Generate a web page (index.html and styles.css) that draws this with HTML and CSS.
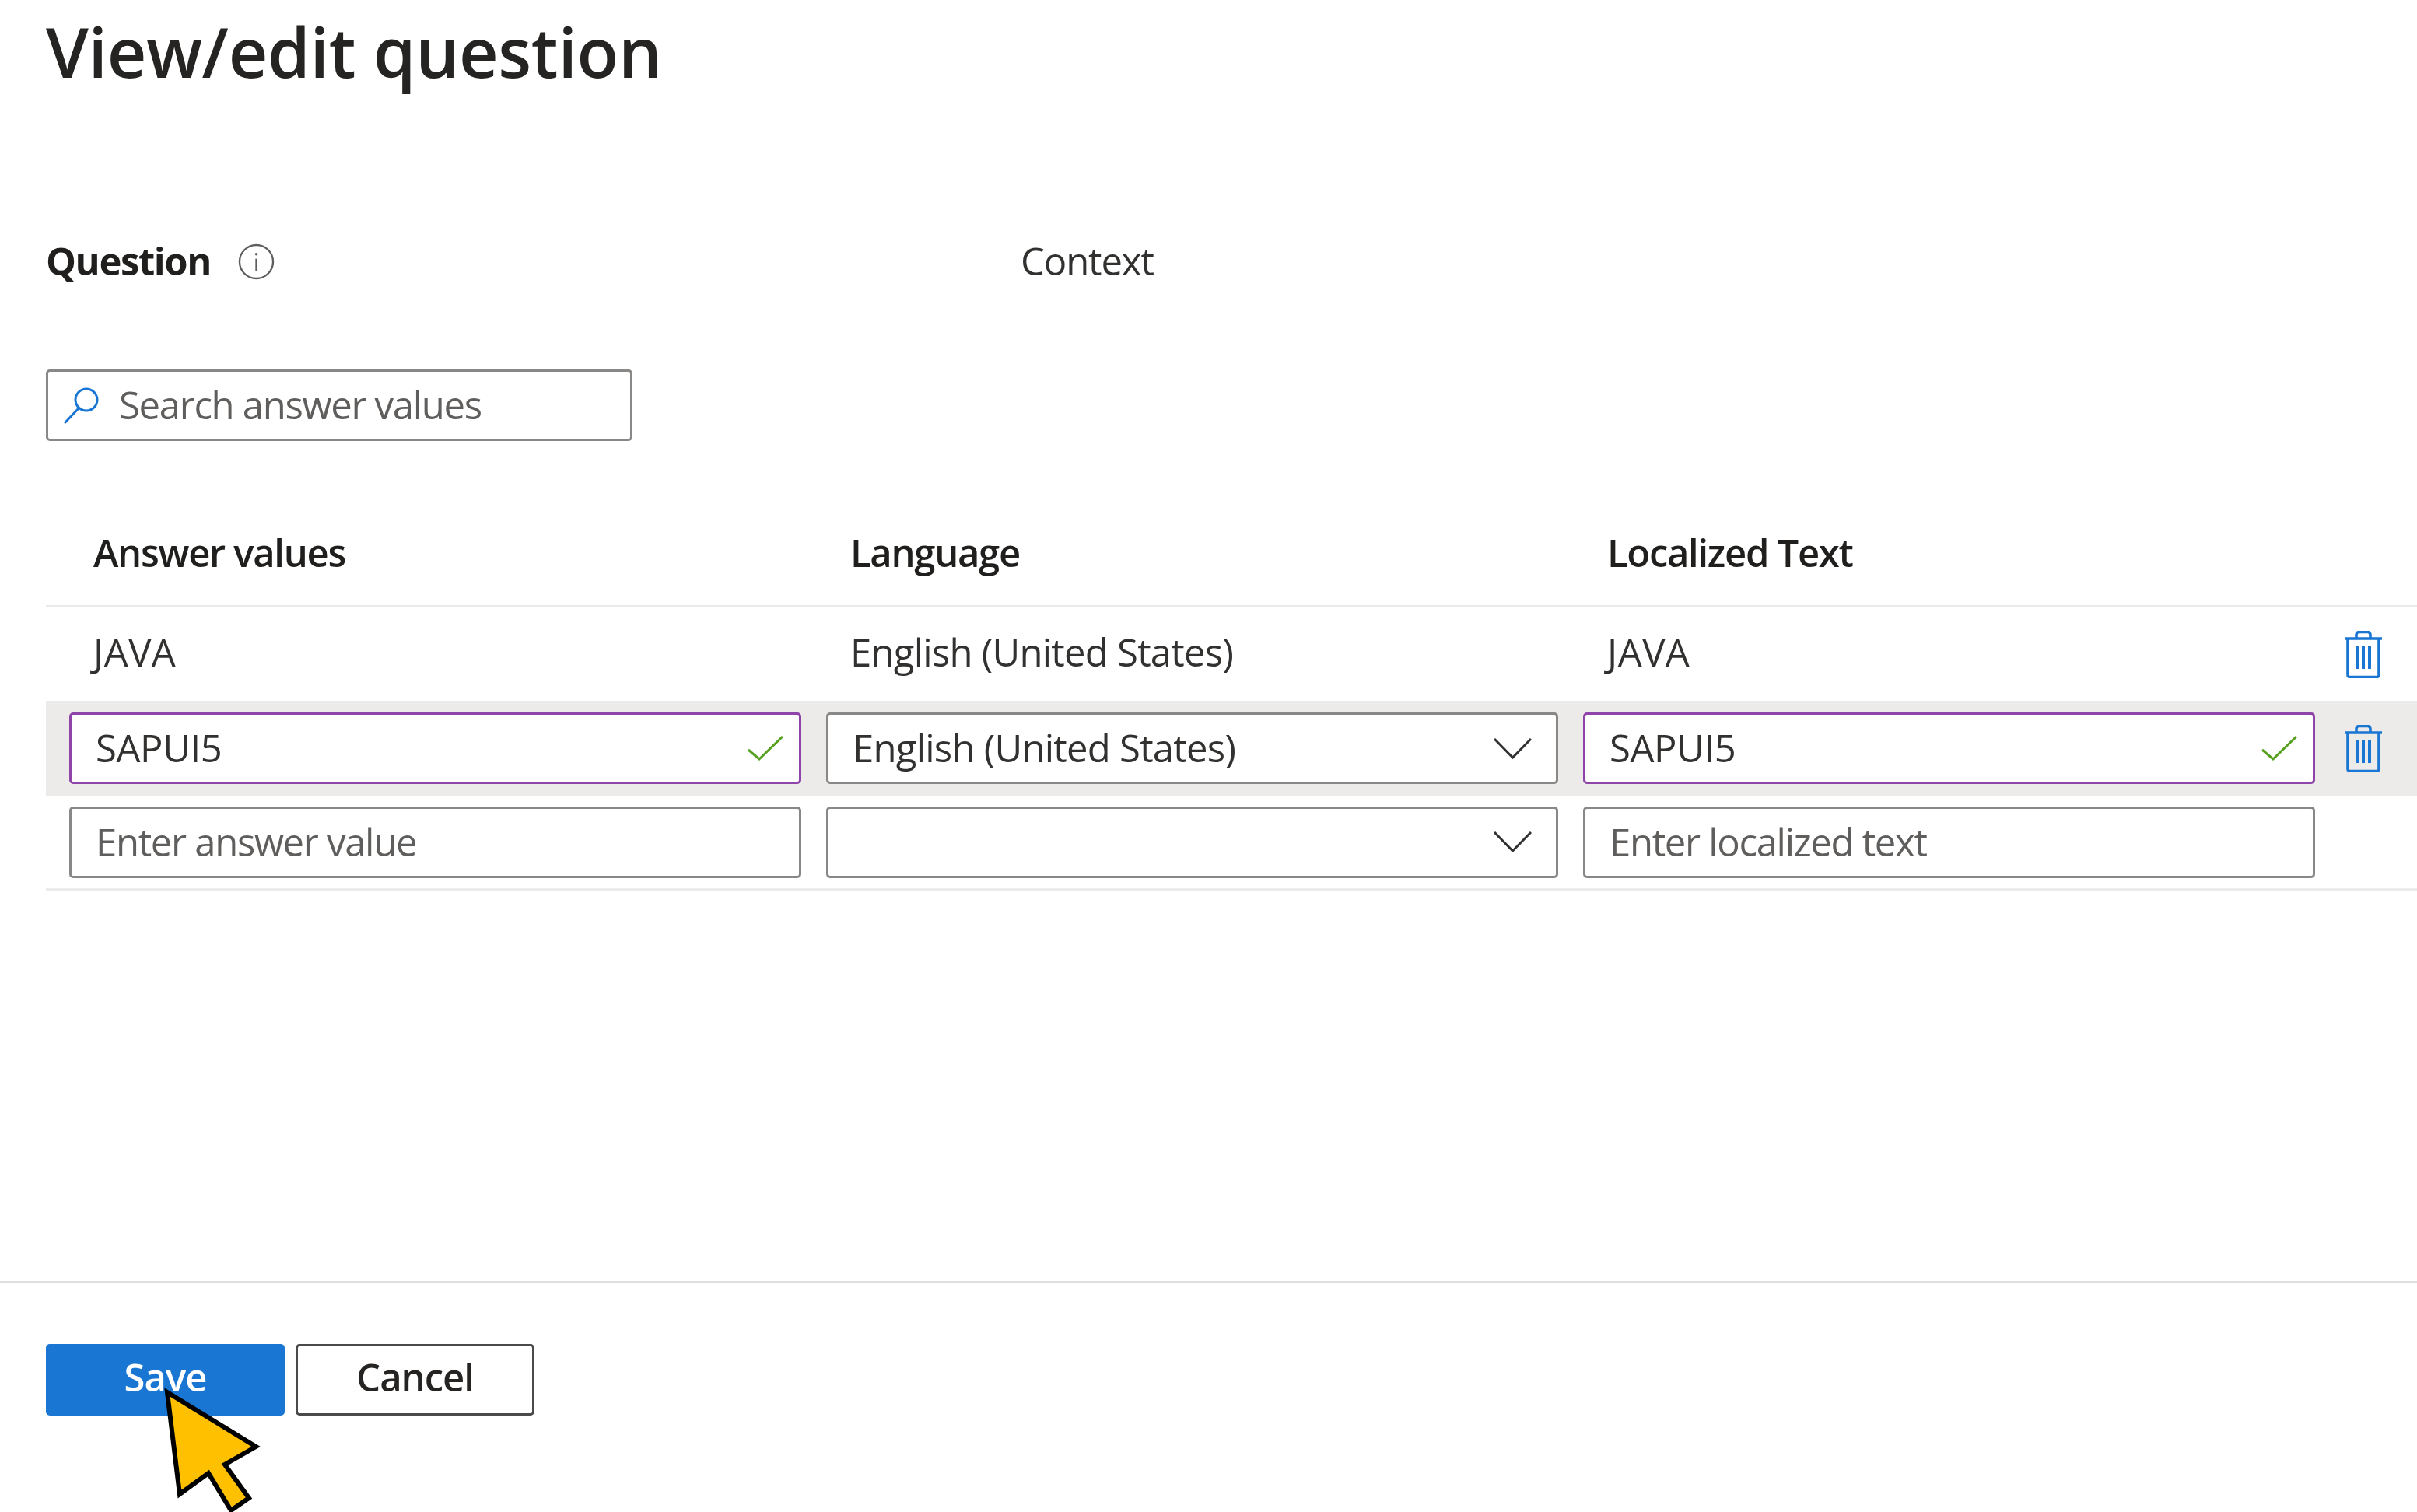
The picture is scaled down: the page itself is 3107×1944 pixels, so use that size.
FILE: index.html
```html
<!DOCTYPE html>
<html lang="en">
<head>
<meta charset="utf-8">
<title>View/edit question</title>
<link rel="stylesheet" href="styles.css">
</head>
<body>
<main class="page">
  <h1 class="title">View/edit question</h1>
  <section class="meta">
    <div class="question">
      <span class="question-label">Question</span>
      <svg class="info" viewBox="0 0 48 48" aria-hidden="true"><circle cx="24" cy="24" r="22" fill="none" stroke="#605e5c" stroke-width="2.4"/><circle cx="24" cy="14" r="1.8" fill="#605e5c"/><path d="M24 20v16" stroke="#605e5c" stroke-width="2.4"/></svg>
    </div>
    <div class="context">Context</div>
  </section>
  <div class="search field">
    <svg class="search-icon" viewBox="0 0 48 48" aria-hidden="true"><circle cx="29" cy="17" r="14" fill="none" stroke="#1976d2" stroke-width="3"/><path d="M19 28 2 46" fill="none" stroke="#1976d2" stroke-width="3" stroke-linecap="round"/></svg>
    <span class="placeholder">Search answer values</span>
  </div>
  <section class="table">
    <div class="row head">
      <div class="cell">Answer values</div>
      <div class="cell">Language</div>
      <div class="cell">Localized Text</div>
    </div>
    <div class="row plain">
      <div class="cell java">JAVA</div>
      <div class="cell">English (United States)</div>
      <div class="cell java">JAVA</div>
      <svg class="trash" viewBox="0 0 50 61" aria-hidden="true"><path d="M1 10h48M5 10v47a2.5 2.5 0 0 0 2.5 2.5h35a2.500 2.500 0 0 0 2.500-2.500V10M16 10V5a3.500 3.500 0 0 1 3.500-3.500h11A3.500 3.500 0 0 1 34 5v5" fill="none" stroke="#1976d2" stroke-width="3.600"/><path d="M17 20v29M25 20v29M33 20v29" fill="none" stroke="#1976d2" stroke-width="4"/></svg>
    </div>
    <div class="row selected">
      <div class="field valid"><span class="caps">SAPUI5</span><svg class="check" viewBox="0 0 46 32" aria-hidden="true"><path d="M1 18 15 30 45 1" fill="none" stroke="#57a01f" stroke-width="3"/></svg></div>
      <div class="field"><span>English (United States)</span><svg class="chevron" viewBox="0 0 49 27" aria-hidden="true"><path d="M1 1 24.500 25 48 1" fill="none" stroke="#323130" stroke-width="3"/></svg></div>
      <div class="field valid"><span class="caps">SAPUI5</span><svg class="check" viewBox="0 0 46 32" aria-hidden="true"><path d="M1 18 15 30 45 1" fill="none" stroke="#57a01f" stroke-width="3"/></svg></div>
      <svg class="trash" viewBox="0 0 50 61" aria-hidden="true"><path d="M1 10h48M5 10v47a2.5 2.5 0 0 0 2.5 2.5h35a2.500 2.500 0 0 0 2.500-2.500V10M16 10V5a3.500 3.500 0 0 1 3.500-3.500h11A3.500 3.500 0 0 1 34 5v5" fill="none" stroke="#1976d2" stroke-width="3.600"/><path d="M17 20v29M25 20v29M33 20v29" fill="none" stroke="#1976d2" stroke-width="4"/></svg>
    </div>
    <div class="row new">
      <div class="field"><span class="placeholder">Enter answer value</span></div>
      <div class="field"><span></span><svg class="chevron" viewBox="0 0 49 27" aria-hidden="true"><path d="M1 1 24.500 25 48 1" fill="none" stroke="#323130" stroke-width="3"/></svg></div>
      <div class="field"><span class="placeholder">Enter localized text</span></div>
    </div>
  </section>
  <footer class="footer">
    <div class="actions">
      <button class="btn primary">Save</button>
      <button class="btn secondary">Cancel</button>
    </div>
    <svg class="cursor" viewBox="0 0 130 162" aria-hidden="true"><path d="M5 5 119 75 79 98 110 141 87 157 58 109 21 136Z" fill="#ffc000" stroke="#000" stroke-width="6" stroke-linejoin="miter"/></svg>
  </footer>
</main>
</body>
</html>
```
FILE: styles.css
```css
* { box-sizing: border-box; }
html, body { margin: 0; background: #fff; }
body { width: 3107px; height: 1944px; overflow: hidden; font-family: "Open Sans", "Liberation Sans", sans-serif; color: #323130; }
.page { position: relative; height: 1944px; }
.title { margin: 0; padding: 0 0 0 59px; height: 270px; font-size: 88px; line-height: 132px; font-weight: 600; letter-spacing: -0.3px; color: #252423; }
.meta { display: flex; align-items: center; height: 135px; padding: 0 0 6px 59px; }
.question { width: 1253px; display: flex; align-items: center; gap: 35px; }
.question-label { font-size: 49px; font-weight: 700; letter-spacing: -1.4px; color: #201f1e; }
.info { width: 47px; height: 47px; margin-top: 4px; }
.context { font-size: 49px; letter-spacing: -1.1px; }
.field { display: flex; align-items: center; justify-content: space-between; height: 92px; padding: 0 20px 2px 31px; font-size: 49px; letter-spacing: -0.75px; background: #fff; border: 3px solid #8a8886; border-radius: 5px; }
.search { justify-content: flex-start; width: 754px; margin: 70px 0 0 59px; padding: 0 0 2px 20px; gap: 23px; }
.search-icon { width: 48px; height: 48px; margin-top: 2px; }
.placeholder { color: #605e5c; letter-spacing: -1.3px; }
.table { margin: 0 0 0 59px; padding-top: 94px; }
.row { display: grid; grid-template-columns: 941px 941px 941px 1fr; column-gap: 32px; padding-left: 30px; align-items: center; }
.head { height: 120px; padding-bottom: 20px; border-bottom: 3px solid #edebe9; font-weight: 600; font-size: 49px; letter-spacing: -1.3px; color: #201f1e; }
.plain { height: 120px; padding-bottom: 6px; font-size: 49px; letter-spacing: -0.75px; }
.cell { padding-left: 31px; }
.caps { letter-spacing: -0.4px; }
.java { letter-spacing: 0.5px; }
.selected { height: 122px; background: #edebe9; }
.new { height: 122px; border-bottom: 3px solid #edebe9; }
.valid { border-color: #8e44a8; }
.check { width: 46px; height: 32px; margin-top: 2px; }
.chevron { width: 49px; height: 27px; margin: 2px 11px 0 0; }
.trash { width: 50px; height: 61px; margin-left: 5px; }
.plain .trash { margin-top: 6px; }
.footer { margin-top: 502px; border-top: 3px solid #e1dfdd; padding: 78px 0 0 59px; position: relative; }
.actions { display: flex; gap: 14px; }
.btn { width: 307px; height: 92px; padding: 0 0 8px; font: 600 49px "Open Sans", "Liberation Sans", sans-serif; letter-spacing: -1px; border-radius: 5px; }
.primary { background: #1976d2; color: #fff; border: 0; }
.secondary { background: #fff; color: #252423; border: 3px solid #4a4a4a; }
.cursor { position: absolute; left: 210px; top: 135px; width: 130px; height: 162px; }
```
